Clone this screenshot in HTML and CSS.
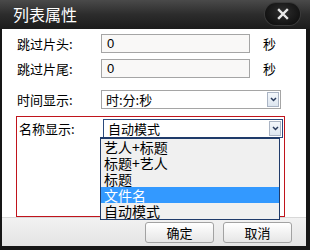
FILE: index.html
```html
<!DOCTYPE html>
<html>
  <head>
    <title>列表属性</title>
    <link rel="stylesheet" href="styles.css">
  </head>
  <body>
    <div class="dialog">
      <div class="titlebar">
        <span class="title">列表属性</span>
        <div class="close">
          <svg width="12" height="12" viewBox="0 0 12 12"><path d="M2 2 L10 10 M10 2 L2 10" stroke="#e8e8e8" stroke-width="2.4" stroke-linecap="square"/></svg>
        </div>
      </div>
      <div class="frame">
        <div class="content">
          <div class="row r1">
            <span class="label">跳过片头:</span>
            <div class="input">0</div>
            <span class="unit">秒</span>
          </div>
          <div class="row r2">
            <span class="label">跳过片尾:</span>
            <div class="input">0</div>
            <span class="unit">秒</span>
          </div>
          <div class="row r3">
            <span class="label">时间显示:</span>
            <div class="select">
              <span>时:分:秒</span>
              <span class="arrow"><svg width="7" height="5" viewBox="0 0 7 5"><path d="M1 1 L3.5 3.5 L6 1" fill="none" stroke="#2a3b5c" stroke-width="1.5"/></svg></span>
            </div>
          </div>
          <div class="group">
            <div class="row">
              <span class="label">名称显示:</span>
              <div class="select open">
                <span>自动模式</span>
                <span class="arrow"><svg width="7" height="5" viewBox="0 0 7 5"><path d="M1 1 L3.5 3.5 L6 1" fill="none" stroke="#2a3b5c" stroke-width="1.5"/></svg></span>
              </div>
            </div>
            <ul class="droplist">
              <li>艺人+标题</li>
              <li>标题+艺人</li>
              <li>标题</li>
              <li class="sel">文件名</li>
              <li>自动模式</li>
            </ul>
          </div>
        </div>
        <div class="footer">
          <button class="btn">确定</button>
          <button class="btn">取消</button>
        </div>
      </div>
    </div>
  </body>
</html>
```
FILE: styles.css
```css
body { margin: 0; background: #111; font-family: "Noto Sans CJK SC", "Noto Sans", sans-serif; font-size: 13px; color: #000; }

.dialog { width: 310px; height: 250px; background: #161616; display: flex; flex-direction: column; }

.titlebar { height: 29px; flex: none; display: flex; align-items: center; justify-content: space-between; padding: 0 10px 0 13px; box-sizing: border-box;
  background: linear-gradient(#4a4a4a, #2c2c2c 50%, #1c1c1c); }
.title { color: #fff; font-size: 16px; line-height: 29px; margin-top: -1px; }
.close { width: 35px; height: 22px; margin-top: -2px; border-radius: 11px; display: flex; align-items: center; justify-content: center;
  background: radial-gradient(ellipse at 50% 40%, #2e2e2e, #101010 80%); box-shadow: 0 0 0 1px #3a3a3a; }

.frame { flex: 1; margin: 0 4px 4px 2px; display: flex; flex-direction: column; background: #fff; }
.content { flex: 1; padding: 5px 0 0 14px; position: relative; }

.row { display: flex; align-items: center; }
.label { width: 84px; flex: none; line-height: 19px; padding-left: 1px; }
.r2 { margin-top: 6px; }
.r3 { margin-top: 12px; }

.input { width: 149px; height: 19px; box-sizing: border-box; border: 1px solid #a5a5a5; background: #f9f8f7; padding-left: 5px; line-height: 17px;
  font-family: "Liberation Sans", sans-serif; font-size: 13px; }
.unit { margin-left: 13px; }

.select { width: 180px; height: 19px; box-sizing: border-box; border: 1px solid #a5a5a5; background: #fff; display: flex; align-items: center;
  justify-content: space-between; padding: 0 1px 0 4px; line-height: 17px; }
.arrow { width: 12px; height: 15px; box-sizing: border-box; border: 1px solid #aab4c4; background: linear-gradient(#f4f7fb, #dde6f0);
  display: flex; align-items: center; justify-content: center; }

.group { margin-top: 7px; width: 269px; height: 101px; box-sizing: border-box; border: 1px solid #c0141c; margin-left: 0; padding: 2px 0 0 1px; position: relative; }
.select.open { border-color: #2b4a7c; }

.droplist { position: absolute; left: 83px; top: 20px; width: 180px; box-sizing: border-box; margin: 0; padding: 0; list-style: none;
  border: 1px solid #1f3b6a; border-top: 2px solid #1f3b6a; background: #f0f0f0; }
.droplist li { height: 16px; line-height: 16px; padding-left: 3px; font-size: 14px; }
.droplist li.sel { background: #3399ff; color: #fff; }

.footer { height: 28px; flex: none; display: flex; justify-content: flex-end; align-items: center; gap: 9px; padding-right: 14px;
  background: linear-gradient(#f2f2f2, #e4e4e4); border-top: 1px solid #d8d8d8; }
.btn { width: 69px; height: 21px; border: 1px solid #a2a2a2; border-radius: 3px; background: linear-gradient(#ffffff, #e6e6e6);
  font-family: "Noto Sans CJK SC", sans-serif; font-size: 13px; padding: 0; color: #000; }
```
